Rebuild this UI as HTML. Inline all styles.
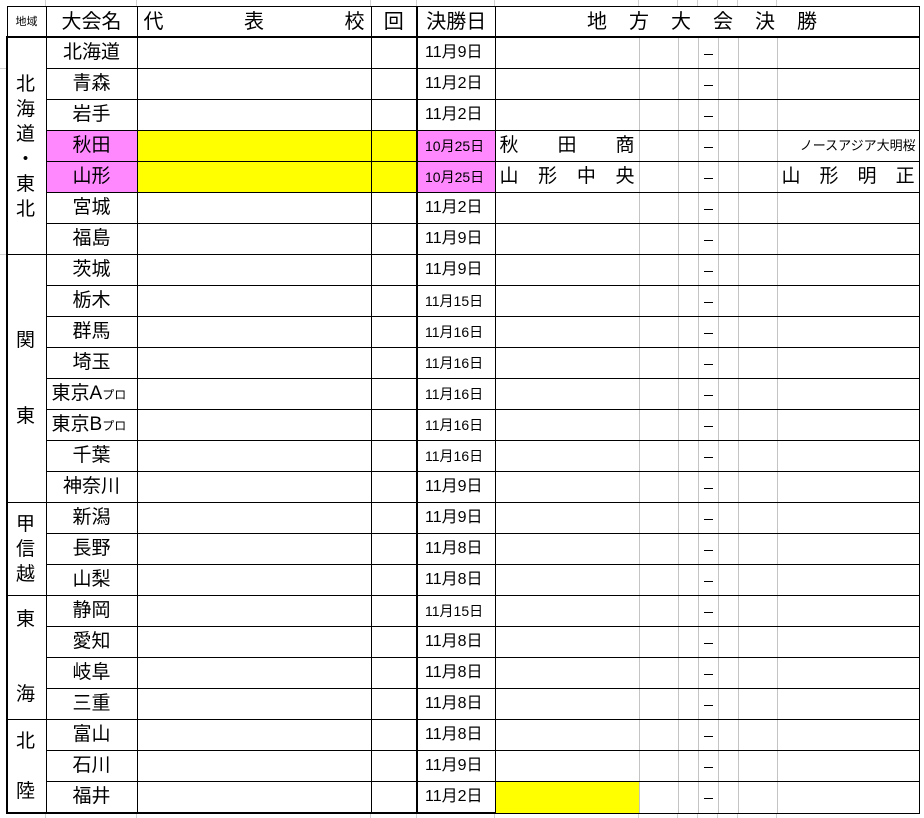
<!DOCTYPE html>
<html><head><meta charset="utf-8"><style>
body{margin:0;width:924px;height:818px;background:#fff;position:relative;overflow:hidden;font-family:"Liberation Sans","Noto Sans CJK JP",sans-serif;color:#000}
.g{position:absolute;background:#d0d0d0}
table{position:absolute;left:6px;top:6px;border-collapse:collapse;table-layout:fixed;width:912px;background:#fff}
td{padding:0;border:1px solid #000;height:30px;text-align:center;white-space:nowrap;overflow:hidden;font-size:19px;line-height:20px;background:#fff}
tr.h td{height:29px}
td.rg{border-left:2px solid #000}
td.dt{font-size:16px;border-left:2px solid #000;text-align:left;padding-left:7px}
td.sm{font-size:14px}
td.r{border-left-color:#c4c4c4;border-right-color:#c4c4c4}
td.r1{border-left:1px solid #000;border-right-color:#c4c4c4}
td.rl{border-left-color:#c4c4c4;border-right:1px solid #000}
.pk{background:#ff88ff}
.yl{background:#ffff00}
.jt{text-align:justify;text-align-last:justify;padding:0 4px}
tr.last td{border-bottom:2px solid #000}
tr.last td.r,tr.last td.r1,tr.last td.rl{border-bottom:1px solid #000}
tr.h td{border-bottom:2px solid #000}
.d{display:block;width:9px;height:1px;background:#000;margin:2px auto 0 5px}
.c{position:absolute;left:6px;width:39px;text-align:center;font-size:19px;line-height:24px;height:24px;margin-top:-12px}
</style></head><body>
<div class="g" style="left:45px;top:0;width:1px;height:818px"></div>
<div class="g" style="left:136px;top:0;width:1px;height:818px"></div>
<div class="g" style="left:370px;top:0;width:1px;height:818px"></div>
<div class="g" style="left:416px;top:0;width:1px;height:818px"></div>
<div class="g" style="left:494px;top:0;width:1px;height:818px"></div>
<div class="g" style="left:638px;top:0;width:1px;height:818px"></div>
<div class="g" style="left:677px;top:0;width:1px;height:818px"></div>
<div class="g" style="left:697px;top:0;width:1px;height:818px"></div>
<div class="g" style="left:717px;top:0;width:1px;height:818px"></div>
<div class="g" style="left:737px;top:0;width:1px;height:818px"></div>
<div class="g" style="left:776px;top:0;width:1px;height:818px"></div>
<div class="g" style="left:0;top:254px;width:6px;height:1px"></div>
<div class="g" style="left:0;top:68px;width:6px;height:1px"></div>
<table>
<colgroup><col style="width:39px"><col style="width:91px"><col style="width:234px"><col style="width:46px"><col style="width:78px"><col style="width:144px"><col style="width:39px"><col style="width:20px"><col style="width:20px"><col style="width:20px"><col style="width:39px"><col style="width:142px"></colgroup>
<tr class="h"><td style="font-size:11px">地域</td><td style="font-size:20px">大会名</td><td style="font-size:20px;text-align:justify;text-align-last:justify;padding:0 6px">代 表 校</td><td style="font-size:20px">回</td><td style="font-size:20px;border-left:2px solid #000">決勝日</td><td colspan="7" style="font-size:20px;letter-spacing:22px;padding-left:12px">地方大会決勝</td></tr>

<tr><td class="rg" rowspan="7"></td><td>北海道</td><td></td><td></td><td class="dt">11月9日</td><td class="r1"></td><td class="r"></td><td class="r"></td><td class="r"><span class="d"></span></td><td class="r"></td><td class="r"></td><td class="rl"></td></tr>
<tr><td>青森</td><td></td><td></td><td class="dt">11月2日</td><td class="r1"></td><td class="r"></td><td class="r"></td><td class="r"><span class="d"></span></td><td class="r"></td><td class="r"></td><td class="rl"></td></tr>
<tr><td>岩手</td><td></td><td></td><td class="dt">11月2日</td><td class="r1"></td><td class="r"></td><td class="r"></td><td class="r"><span class="d"></span></td><td class="r"></td><td class="r"></td><td class="rl"></td></tr>
<tr><td class="pk">秋田</td><td class="yl"></td><td class="yl"></td><td class="dt pk sm">10月25日</td><td class="r1 jt">秋田商</td><td class="r"></td><td class="r"></td><td class="r"><span class="d"></span></td><td class="r"></td><td class="r"></td><td class="rl" style="font-size:13px;text-align:right;padding-right:3px">ノースアジア大明桜</td></tr>
<tr><td class="pk">山形</td><td class="yl"></td><td class="yl"></td><td class="dt pk sm">10月25日</td><td class="r1 jt">山形中央</td><td class="r"></td><td class="r"></td><td class="r"><span class="d"></span></td><td class="r"></td><td class="r"></td><td class="rl jt">山形明正</td></tr>
<tr><td>宮城</td><td></td><td></td><td class="dt">11月2日</td><td class="r1"></td><td class="r"></td><td class="r"></td><td class="r"><span class="d"></span></td><td class="r"></td><td class="r"></td><td class="rl"></td></tr>
<tr><td>福島</td><td></td><td></td><td class="dt">11月9日</td><td class="r1"></td><td class="r"></td><td class="r"></td><td class="r"><span class="d"></span></td><td class="r"></td><td class="r"></td><td class="rl"></td></tr>

<tr><td class="rg" rowspan="8"></td><td>茨城</td><td></td><td></td><td class="dt">11月9日</td><td class="r1"></td><td class="r"></td><td class="r"></td><td class="r"><span class="d"></span></td><td class="r"></td><td class="r"></td><td class="rl"></td></tr>
<tr><td>栃木</td><td></td><td></td><td class="dt sm">11月15日</td><td class="r1"></td><td class="r"></td><td class="r"></td><td class="r"><span class="d"></span></td><td class="r"></td><td class="r"></td><td class="rl"></td></tr>
<tr><td>群馬</td><td></td><td></td><td class="dt sm">11月16日</td><td class="r1"></td><td class="r"></td><td class="r"></td><td class="r"><span class="d"></span></td><td class="r"></td><td class="r"></td><td class="rl"></td></tr>
<tr><td>埼玉</td><td></td><td></td><td class="dt sm">11月16日</td><td class="r1"></td><td class="r"></td><td class="r"></td><td class="r"><span class="d"></span></td><td class="r"></td><td class="r"></td><td class="rl"></td></tr>
<tr><td style="text-align:left;padding-left:5px">東京A<span style="font-size:12px;line-height:10px">プロ</span></td><td></td><td></td><td class="dt sm">11月16日</td><td class="r1"></td><td class="r"></td><td class="r"></td><td class="r"><span class="d"></span></td><td class="r"></td><td class="r"></td><td class="rl"></td></tr>
<tr><td style="text-align:left;padding-left:5px">東京B<span style="font-size:12px;line-height:10px">プロ</span></td><td></td><td></td><td class="dt sm">11月16日</td><td class="r1"></td><td class="r"></td><td class="r"></td><td class="r"><span class="d"></span></td><td class="r"></td><td class="r"></td><td class="rl"></td></tr>
<tr><td>千葉</td><td></td><td></td><td class="dt sm">11月16日</td><td class="r1"></td><td class="r"></td><td class="r"></td><td class="r"><span class="d"></span></td><td class="r"></td><td class="r"></td><td class="rl"></td></tr>
<tr><td>神奈川</td><td></td><td></td><td class="dt">11月9日</td><td class="r1"></td><td class="r"></td><td class="r"></td><td class="r"><span class="d"></span></td><td class="r"></td><td class="r"></td><td class="rl"></td></tr>

<tr><td class="rg" rowspan="3"></td><td>新潟</td><td></td><td></td><td class="dt">11月9日</td><td class="r1"></td><td class="r"></td><td class="r"></td><td class="r"><span class="d"></span></td><td class="r"></td><td class="r"></td><td class="rl"></td></tr>
<tr><td>長野</td><td></td><td></td><td class="dt">11月8日</td><td class="r1"></td><td class="r"></td><td class="r"></td><td class="r"><span class="d"></span></td><td class="r"></td><td class="r"></td><td class="rl"></td></tr>
<tr><td>山梨</td><td></td><td></td><td class="dt">11月8日</td><td class="r1"></td><td class="r"></td><td class="r"></td><td class="r"><span class="d"></span></td><td class="r"></td><td class="r"></td><td class="rl"></td></tr>

<tr><td class="rg" rowspan="4"></td><td>静岡</td><td></td><td></td><td class="dt sm">11月15日</td><td class="r1"></td><td class="r"></td><td class="r"></td><td class="r"><span class="d"></span></td><td class="r"></td><td class="r"></td><td class="rl"></td></tr>
<tr><td>愛知</td><td></td><td></td><td class="dt">11月8日</td><td class="r1"></td><td class="r"></td><td class="r"></td><td class="r"><span class="d"></span></td><td class="r"></td><td class="r"></td><td class="rl"></td></tr>
<tr><td>岐阜</td><td></td><td></td><td class="dt">11月8日</td><td class="r1"></td><td class="r"></td><td class="r"></td><td class="r"><span class="d"></span></td><td class="r"></td><td class="r"></td><td class="rl"></td></tr>
<tr><td>三重</td><td></td><td></td><td class="dt">11月8日</td><td class="r1"></td><td class="r"></td><td class="r"></td><td class="r"><span class="d"></span></td><td class="r"></td><td class="r"></td><td class="rl"></td></tr>

<tr><td class="rg" rowspan="3" style="border-bottom:2px solid #000"></td><td>富山</td><td></td><td></td><td class="dt">11月8日</td><td class="r1"></td><td class="r"></td><td class="r"></td><td class="r"><span class="d"></span></td><td class="r"></td><td class="r"></td><td class="rl"></td></tr>
<tr><td>石川</td><td></td><td></td><td class="dt">11月9日</td><td class="r1"></td><td class="r"></td><td class="r"></td><td class="r"><span class="d"></span></td><td class="r"></td><td class="r"></td><td class="rl"></td></tr>
<tr class="last"><td>福井</td><td></td><td></td><td class="dt">11月2日</td><td class="r1 yl"></td><td class="r"></td><td class="r"></td><td class="r"><span class="d"></span></td><td class="r"></td><td class="r"></td><td class="rl"></td></tr>
</table>
<div class="c" style="top:85px">北</div><div class="c" style="top:110px">海</div><div class="c" style="top:135px">道</div><div class="c" style="top:160px">・</div><div class="c" style="top:185px">東</div><div class="c" style="top:210px">北</div>
<div class="c" style="top:341px">関</div><div class="c" style="top:417px">東</div>
<div class="c" style="top:525px">甲</div><div class="c" style="top:550px">信</div><div class="c" style="top:575px">越</div>
<div class="c" style="top:620px">東</div><div class="c" style="top:695px">海</div>
<div class="c" style="top:742px">北</div><div class="c" style="top:792px">陸</div>
</body></html>
